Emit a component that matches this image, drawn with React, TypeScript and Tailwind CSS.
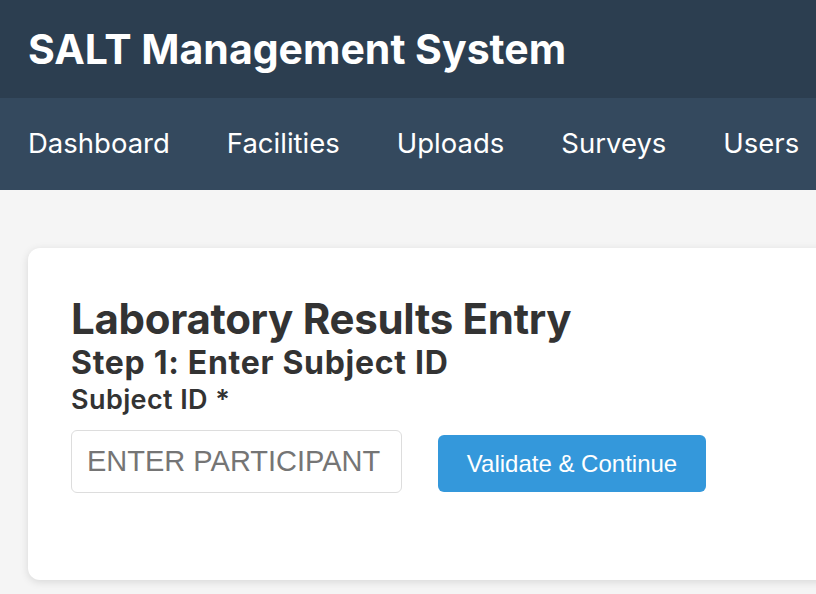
const navItems = ["Dashboard", "Facilities", "Uploads", "Surveys", "Users"];

export default function App() {
  return (
    <div className="min-h-screen w-[816px] h-[594px] overflow-hidden bg-[#f5f5f5] font-['Inter',sans-serif]">
      {/* Header */}
      <header className="h-[98px] bg-[#2c3e50] flex items-center px-[28px]">
        <h1 className="text-white text-[41px] font-bold leading-none">SALT Management System</h1>
      </header>

      {/* Nav */}
      <nav className="h-[92px] bg-[#34495e] flex items-center gap-[57px] px-[28px] whitespace-nowrap">
        {navItems.map((item) => (
          <a key={item} className="text-white text-[27.5px] leading-none">
            {item}
          </a>
        ))}
      </nav>

      {/* Content */}
      <main className="pt-[58px] pl-[28px]">
        <div className="w-[830px] h-[332px] bg-white rounded-[12px] shadow-[0_2px_8px_rgba(0,0,0,0.12)] pl-[43px] pt-[45px]">
          <h2 className="text-[#333] text-[42px] font-bold leading-[52px] tracking-[-0.3px]">Laboratory Results Entry</h2>
          <h3 className="text-[#333] text-[32px] font-bold leading-[36px] tracking-[0.7px]">Step 1: Enter Subject ID</h3>
          <label className="block text-[#333] text-[27px] font-semibold leading-[37px] tracking-[0.4px]">Subject ID *</label>
          <div className="flex items-center gap-[36px] mt-[12px]">
            <input
              type="text"
              placeholder="ENTER PARTICIPANT"
              className="w-[331px] h-[63px] border border-[#ddd] rounded-[6px] px-[15px] text-[29px] font-['Liberation_Sans',Arial,sans-serif] placeholder:text-[#757575] outline-none"
            />
            <button className="w-[268px] h-[57px] mt-[4px] bg-[#3498db] text-white rounded-[6px] text-[24px] font-['Liberation_Sans',Arial,sans-serif]">
              Validate &amp; Continue
            </button>
          </div>
        </div>
      </main>
    </div>
  );
}
